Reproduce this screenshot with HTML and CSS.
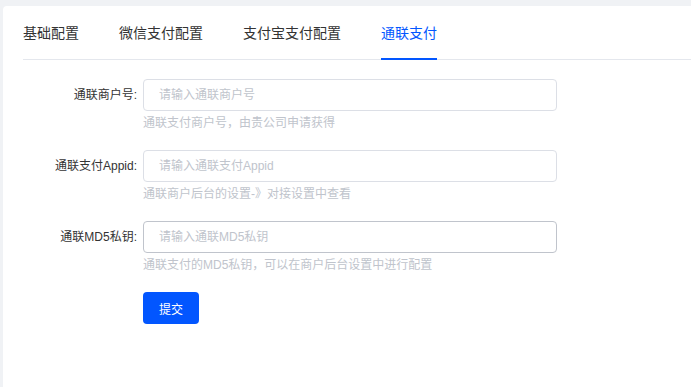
FILE: index.html
```html
<!DOCTYPE html>
<html lang="zh-CN">
<head>
    <meta charset="UTF-8">
    <meta name="viewport" content="width=device-width, initial-scale=1.0">
    <title>支付配置</title>
    <link rel="stylesheet" href="styles.css">
</head>
<body>
    <div class="card">
        <!-- Tabs -->
        <nav class="tabs">
            <div class="tab">基础配置</div>
            <div class="tab">微信支付配置</div>
            <div class="tab">支付宝支付配置</div>
            <div class="tab active">通联支付</div>
        </nav>

        <!-- Form -->
        <form class="pay-form">
            <div class="form-item">
                <label class="form-label" for="mch-id">通联商户号:</label>
                <div class="form-field">
                    <input type="text" id="mch-id" class="form-control" placeholder="请输入通联商户号">
                    <div class="form-help">通联支付商户号，由贵公司申请获得</div>
                </div>
            </div>
            <div class="form-item">
                <label class="form-label" for="app-id">通联支付Appid:</label>
                <div class="form-field">
                    <input type="text" id="app-id" class="form-control" placeholder="请输入通联支付Appid">
                    <div class="form-help">通联商户后台的设置-》对接设置中查看</div>
                </div>
            </div>
            <div class="form-item">
                <label class="form-label" for="md5-key">通联MD5私钥:</label>
                <div class="form-field">
                    <input type="text" id="md5-key" class="form-control hover" placeholder="请输入通联MD5私钥">
                    <div class="form-help">通联支付的MD5私钥，可以在商户后台设置中进行配置</div>
                </div>
            </div>
            <div class="form-item">
                <div class="form-label"></div>
                <div class="form-field">
                    <button type="button" class="btn-primary">提交</button>
                </div>
            </div>
        </form>
    </div>
</body>
</html>
```

FILE: styles.css
```css
html, body {
    height: 100%;
}

body {
    box-sizing: border-box;
    margin: 0;
    padding: 6px 0 0 3px;
    background-color: #f0f2f5;
    font-family: "Liberation Sans", "Noto Sans CJK SC", sans-serif;
    overflow: hidden;
}

.card {
    box-sizing: border-box;
    height: 100%;
    background-color: #fff;
    border-radius: 4px 0 0 0;
    padding: 7px 0 0 20px;
}

.tabs {
    display: flex;
    border-bottom: 1px solid #e4e7ed;
    height: 46px;
}

.tab {
    position: relative;
    line-height: 40px;
    font-size: 14px;
    color: #333;
    margin-right: 40px;
}

.tab.active {
    color: #0256ff;
}

.tab.active::after {
    content: "";
    position: absolute;
    left: 0;
    right: 0;
    bottom: -1px;
    height: 2px;
    background-color: #0256ff;
}

.pay-form {
    margin-top: 19px;
}

.form-item {
    display: flex;
    margin-bottom: 18px;
}

.form-label {
    width: 114px;
    padding-right: 6px;
    text-align: right;
    font-size: 12px;
    line-height: 32px;
    color: #333;
}

.form-field {
    width: 414px;
}

.form-control {
    display: block;
    box-sizing: border-box;
    width: 100%;
    height: 32px;
    padding: 0 15px;
    font-size: 12px;
    font-family: inherit;
    border: 1px solid #dcdfe6;
    border-radius: 4px;
    outline: none;
}

.form-control.hover {
    border-color: #c0c4cc;
}

.form-control::placeholder {
    color: #c0c4cc;
}

.form-help {
    margin-top: 3px;
    font-size: 12px;
    line-height: 18px;
    color: #c0c4cc;
}

.btn-primary {
    height: 32px;
    padding: 0 16px;
    font-size: 12px;
    font-family: inherit;
    color: #fff;
    background-color: #0256ff;
    border: none;
    border-radius: 4px;
    cursor: pointer;
}
```
